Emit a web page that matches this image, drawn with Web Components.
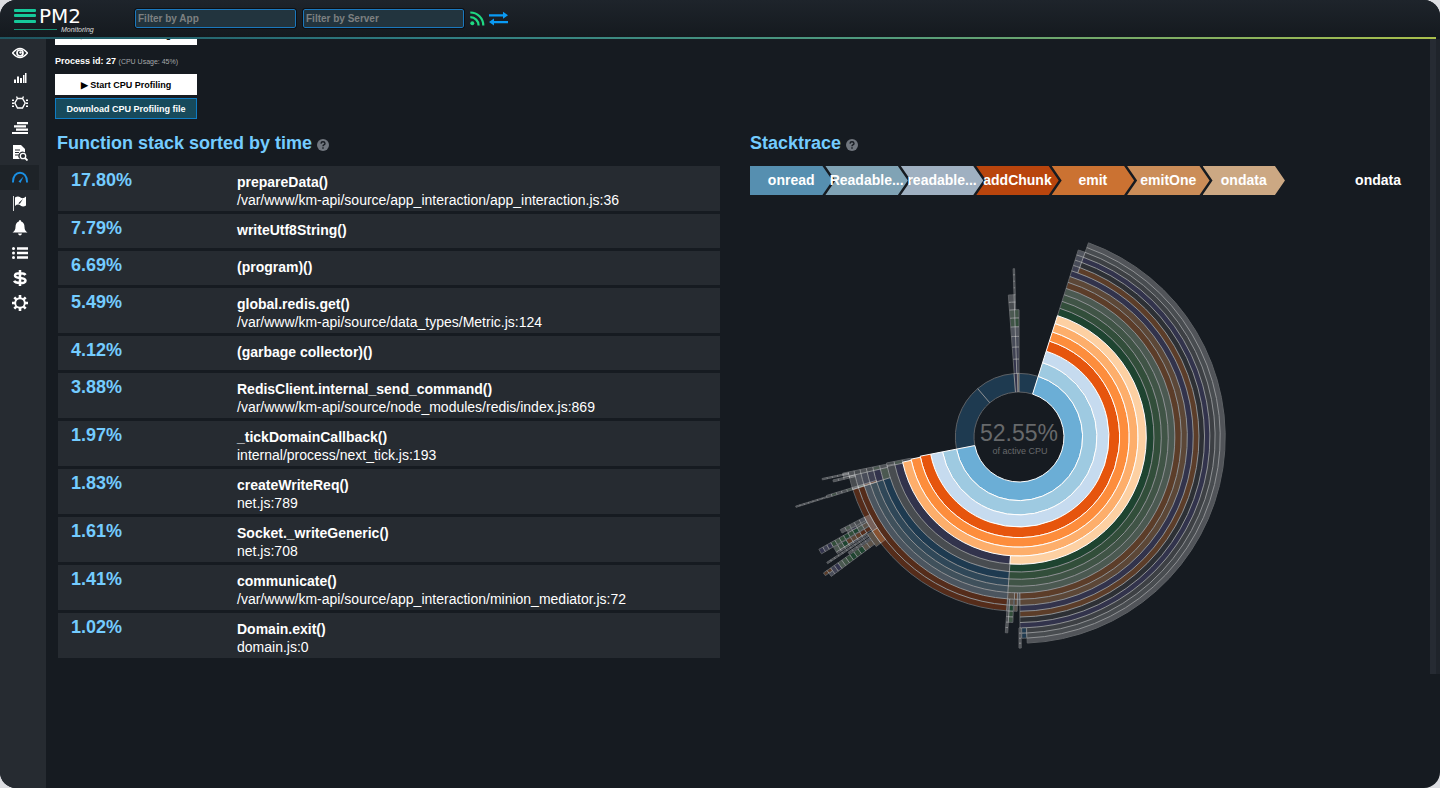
<!DOCTYPE html>
<html lang="en">
<head>
<meta charset="utf-8">
<meta name="viewport" content="width=device-width, initial-scale=1">
<title>PM2 Monitoring</title>
<style>
html, body { margin: 0; background: #dcdde1; }
body { font-family: "Liberation Sans", Arial, sans-serif; color: #fff; }
</style>
</head>
<body>
<pm-app></pm-app>

<script>
const define = (name, html, ready) => {
  const tpl = document.createElement('template');
  tpl.innerHTML = html;
  customElements.define(name, class extends HTMLElement {
    constructor() {
      super();
      this.attachShadow({ mode: 'open' }).append(tpl.content.cloneNode(true));
    }
    connectedCallback() { if (ready) ready(this.shadowRoot, this); }
  });
};

/* ---------- logo ---------- */
define('pm-logo', `
<style>
:host { display: block; width: 110px; height: 36px; }
svg { display: block; }
</style>
<svg width="110" height="36" viewBox="0 0 110 36" role="img" aria-label="PM2 Monitoring">
  <g fill="#16c99a">
    <rect x="14" y="8" width="22" height="3" rx="1"/>
    <rect x="14" y="13" width="22" height="3" rx="1"/>
    <rect x="14" y="19" width="22" height="3" rx="1"/>
    <rect x="14" y="28" width="43" height="1" opacity=".7"/>
  </g>
  <text x="39" y="22" font-family="DejaVu Sans, sans-serif" font-weight="400" font-size="20" fill="#fff">PM2</text>
  <text x="61" y="31" font-family="Liberation Sans, sans-serif" font-style="italic" font-size="7" fill="#ddd">Monitoring</text>
</svg>`);

/* ---------- text filter ---------- */
define('pm-filter', `
<style>
:host { display: block; width: 161px; }
input { display: block; box-sizing: border-box; width: 100%; height: 19px; padding: 0 2px; margin: 0;
  border: 1px solid #1b78bd; border-radius: 2px; background: #22343e; color: #fff; outline: 1px solid #0c1015;
  font: bold 10px "Liberation Sans", Arial, sans-serif; }
input::placeholder { color: #7d8081; opacity: 1; }
</style>
<input type="text">`, (root, host) => {
  const i = root.querySelector('input');
  i.placeholder = host.getAttribute('label');
  i.setAttribute('aria-label', host.getAttribute('label'));
});

/* ---------- top bar ---------- */
define('pm-topbar', `
<style>
:host { display: block; position: relative; z-index: 1; background: linear-gradient(#1e242b, #14191e); }
header { display: flex; align-items: center; height: 36px; padding-top: 1px; box-sizing: border-box; }
pm-logo { margin-right: 25px; }
pm-filter + pm-filter { margin-left: 7px; }
.rule { height: 2px; margin-top: 1px; background: linear-gradient(90deg, #1f5560, #2f7d82 30%, #4f9a7e 60%, #a9bf4c); margin-right: 4px; }
svg { display: block; }
.feed { margin-left: 6px; }
.swap { margin-left: 4px; }
</style>
<header>
  <pm-logo></pm-logo>
  <pm-filter label="Filter by App"></pm-filter>
  <pm-filter label="Filter by Server"></pm-filter>
  <svg class="feed" width="15" height="15" viewBox="0 0 15 15" fill="none" stroke="#1fd882" stroke-width="2.2">
    <circle cx="2.3" cy="12.2" r="2" fill="#1fd882" stroke="none"/>
    <path d="M.3 6.2a8.300 8.300 0 0 1 8.300 8.300M.3 1.500a13 13 0 0 1 13 13"/>
  </svg>
  <svg class="swap" width="19" height="15" viewBox="0 0 19 15" fill="#0a9bf5">
    <path d="M0 3.200H14V.8l5 3.500-5 3.500V5.400H0zM19 12.200H5v2.300L0 11l5-3.500V9.900H19z"/>
  </svg>
</header>
<div class="rule"></div>`);

/* ---------- side navigation ---------- */
const icons = [
  ['Overview', '<path d="M.5 8Q8-1 15.500 8 8 17 .5 8z" fill="none" stroke="#fff" stroke-width="1.500"/><circle cx="8" cy="8" r="3" fill="none" stroke="#fff" stroke-width="1.700"/><circle cx="8.500" cy="7.500" r="1.200"/>'],
  ['Metrics', '<path d="M2 9.500h2V13H2zM5 6.500h2V13H5zM8 8h2v5H8zM11 5h1.500v8H11zM13 3h1.500v10H13z"/>'],
  ['Issues', '<path d="M5.500 3.500h5L13.200 8l-2.700 5h-5L2.800 8zM5.500 3.500 4.500 1.500M10.500 3.500l1-2" fill="none" stroke="#fff" stroke-width="1.400"/><path d="M0 4.500h2V6H0zM0 7.500h2V9H0zM0 10.500h2V12H0zM14 4.500h2V6h-2zM14 7.500h2V9h-2zM14 10.500h2V12h-2z"/>'],
  ['Transactions', '<path d="M5 2h11v2.200H5zM2 5.300h12v2.200H2zM4 8.600h12v2.200H4zM0 11.900h16v2.200H0z"/>'],
  ['Logs', '<path fill-rule="evenodd" d="M1 0h8l4 4v3.500a4 4 0 0 0-5 6.500H1zM3 4.500v1h5v-1zM3 7v1h4V7zM3 9.500v1h3.500v-1z"/><circle cx="11" cy="11" r="2.700" fill="none" stroke="#fff" stroke-width="1.300"/><path d="m13 13 2.500 2.500" stroke="#fff" stroke-width="1.800"/>'],
  ['Profiling', '<path d="M1 12.500C.5-.5 15.500-.5 15 12.500" fill="none" stroke="#1a8fe3" stroke-width="1.900"/><path d="m6.500 11.500 5-5-3 6.500z" fill="#1a8fe3"/>'],
  ['Releases', '<path d="M1 1h1v15H1z" opacity=".8"/><path fill-rule="evenodd" d="M3 2.500q3-2 5.500 0t5.500-1v9q-3 2-5.500 0T3 11zM11 4 7 7.500 6.500 9l1.500-.5z"/>'],
  ['Alerts', '<path d="M8 0q1.200 0 1.200 1.500Q12.500 2.500 12.500 7q0 3.500 3 5.500H.5q3-2 3-5.500 0-4.500 3.300-5.500Q6.800 0 8 0zM6 13.500h4q-.5 2-2 2t-2-2z"/>'],
  ['Events', '<circle cx="1.500" cy="3.500" r="1.500"/><circle cx="1.500" cy="8" r="1.500"/><circle cx="1.500" cy="12.500" r="1.500"/><path d="M5 2.200h11v2.600H5zM5 6.700h11v2.600H5zM5 11.200h11v2.600H5z"/>'],
  ['Billing', '<path d="M13.500 5Q12.500 3.300 8 3.300 3 3.300 3 5.500T8 8q5.500.3 5.500 2.800T8 13q-5 0-5.800-2.200M8 0v16" fill="none" stroke="#fff" stroke-width="2.500"/>'],
  ['Settings', '<circle cx="8" cy="8" r="4.800" fill="none" stroke="#fff" stroke-width="1.900"/><g stroke="#fff" stroke-width="2.600"><path d="M8 0v3M8 13v3M0 8h3M13 8h3M2.300 2.300l2 2M11.700 11.700l2 2M2.300 13.700l2-2M11.700 4.300l2-2"/></g>']
];
define('pm-sidenav', `
<style>
:host { display: block; flex: none; width: 46px; background: #262b31; }
nav { padding-top: 1px; }
a { display: flex; align-items: center; justify-content: center; width: 39px; height: 25px; }
a[aria-current] { background: #1e2328; }
svg { display: block; fill: #fff; }
</style>
<nav>${icons.map(([t, p]) => `<a href="#${t.toLowerCase()}" aria-label="${t}"${t === 'Profiling' ? ' aria-current="page"' : ''}><svg width="16" height="16" viewBox="0 0 16 16">${p}</svg></a>`).join('')}</nav>`);

/* ---------- buttons ---------- */
define('pm-button', `
<style>
:host { display: block; width: 142px; }
button { display: block; box-sizing: border-box; width: 100%; height: 21px; margin: 0; padding: 0; border: 1px solid #fff;
  background: #fff; color: #000; font: bold 9px/12px "Liberation Sans", Arial, sans-serif; white-space: nowrap; }
:host([accent]) button { background: #174a5c; border-color: #0f7cc4; color: #fff; }
</style>
<button type="button"><slot></slot></button>`);

/* ---------- section title ---------- */
define('pm-title', `
<style>
:host { display: block; }
h2 { display: flex; align-items: center; gap: 5px; margin: 0; font-size: 18px; line-height: 22px; font-weight: bold; color: #74ccff; }
svg { display: block; margin-top: 3px; }
</style>
<h2><slot></slot>
<svg width="12" height="12" viewBox="0 0 12 12" role="img" aria-label="Help"><circle cx="6" cy="6" r="6" fill="#70767e"/>
<path d="M4 4.600Q4.100 2.800 6 2.800T8 4.500Q8 5.400 6.900 5.900 6 6.300 6 7.200M6 8.300v1.400" fill="none" stroke="#161b21" stroke-width="1.400"/></svg></h2>`);

/* ---------- function table ---------- */
const rows = [
  ['17.80%', 'prepareData()', '/var/www/km-api/source/app_interaction/app_interaction.js:36'],
  ['7.79%', 'writeUtf8String()'],
  ['6.69%', '(program)()'],
  ['5.49%', 'global.redis.get()', '/var/www/km-api/source/data_types/Metric.js:124'],
  ['4.12%', '(garbage collector)()'],
  ['3.88%', 'RedisClient.internal_send_command()', '/var/www/km-api/source/node_modules/redis/index.js:869'],
  ['1.97%', '_tickDomainCallback()', 'internal/process/next_tick.js:193'],
  ['1.83%', 'createWriteReq()', 'net.js:789'],
  ['1.61%', 'Socket._writeGeneric()', 'net.js:708'],
  ['1.41%', 'communicate()', '/var/www/km-api/source/app_interaction/minion_mediator.js:72'],
  ['1.02%', 'Domain.exit()', 'domain.js:0']
];
define('pm-functions', `
<style>
:host { display: block; }
table { width: 100%; border-collapse: separate; border-spacing: 0 3px; table-layout: fixed; }
th, td { text-align: left; vertical-align: top; background: #262b31; }
th { width: 166px; padding: 2px 0 8px 13px; font-size: 18px; line-height: 24px; color: #74ccff; }
td { padding: 7px 0 2px; font-size: 14px; line-height: 18px; }
strong { display: block; }
</style>
<table aria-label="Function stack sorted by time"><tbody>
${rows.map(([p, f, s]) => `<tr><th scope="row">${p}</th><td><strong>${f}</strong>${s || ''}</td></tr>`).join('')}
</tbody></table>`);

/* ---------- stack breadcrumb ---------- */
const crumbs = [['onread', '#568fb0'], ['Readable...', '#80a3b5'], ['readable...', '#9fb0c1'], ['addChunk', '#b9450d'],
  ['emit', '#cb7232'], ['emitOne', '#cb8d58'], ['ondata', '#cca883']];
define('pm-crumbs', `
<style>
:host { display: flex; justify-content: space-between; align-items: center; font-size: 14px; font-weight: bold; line-height: 29px; }
ol { display: flex; flex: none; width: 535px; margin: 0; padding: 0; list-style: none; }
li { flex: 1 1 0; min-width: 0; position: relative; text-align: center; white-space: nowrap; display: flex; justify-content: center; }
li + li { margin-left: -7px; }
li::before { content: ""; position: absolute; inset: 0; background: var(--c);
  clip-path: polygon(0 0, calc(100% - 10px) 0, 100% 50%, calc(100% - 10px) 100%, 0 100%, 10px 50%); }
li:first-child::before { clip-path: polygon(0 0, calc(100% - 10px) 0, 100% 50%, calc(100% - 10px) 100%, 0 100%); }
li span { position: relative; }
.last { margin-right: 12px; }
</style>
<ol>${crumbs.map(([t, c]) => `<li style="--c:${c}"><span>${t}</span></li>`).join('')}</ol>
<span class="last">ondata</span>`);

/* ---------- sunburst: ring n spans radius 45*sqrt(n) to 45*sqrt(n+1), angles clockwise from the top ---------- */
const C = { b0: '#3182bd', b1: '#6baed6', b2: '#9ecae1', b3: '#c6dbef', o0: '#e6550d', o1: '#fd8d3c', o2: '#fdae6b', o3: '#fdd0a2',
  g0: '#31a354', g1: '#74c476', g2: '#a1d99b', g3: '#c7e9c0', p0: '#756bb1', p1: '#9e9ac8', p2: '#bcbddc', p3: '#dadaeb',
  n0: '#636363', n1: '#969696', n2: '#bdbdbd', n3: '#d9d9d9' };
const R = n => 45 * Math.sqrt(n);
const pt = (r, a) => [r * Math.sin(a * Math.PI / 180), -r * Math.cos(a * Math.PI / 180)].map(v => v.toFixed(2)).join(' ');
const arc = (a0, a1, n, col, dim) => {
  const big = a1 - a0 > 180 ? 1 : 0, i = R(n), o = R(n + 1);
  return `<path${dim ? ' class="dim"' : ''} fill="${C[col]}" d="M${pt(i, a0)}L${pt(o, a0)}A${o} ${o} 0 ${big} 1 ${pt(o, a1)}L${pt(i, a1)}A${i} ${i} 0 ${big} 0 ${pt(i, a0)}Z"/>`;
};
/* consecutive rings over one angle range */
const run = (a0, a1, n, cols) => cols.split(' ').map((c, k) => arc(a0, a1, n + k, c, true)).join('');
const dim = [
  run(259, 319.500, 1, 'b0'), run(319.500, 355.500, 1, 'b0'), run(355.500, 358.500, 1, 'p0'), run(358.500, 360, 1, 'o2'), run(0, 17.600, 1, 'b0'),
  run(355.700, 358, 2, 'p0 p1 p2 p3 g2 g3 n2 n3'), run(358, 360, 2, 'p1 p1 p2 p3 g1 g2'), run(358, 358.500, 8, 'n3 n2 n3 n3 n2 n3'),
  run(17.600, 184.100, 8, 'g0 g1 g2 g3'), run(17.600, 179.700, 12, 'o1 o2 p0'),
  run(19.700, 179.700, 15, 'o1 n0 p0'), run(19.700, 177.700, 18, 'n1 n2 n3'),
  run(17.600, 19.700, 15, 'p1 p2 p2 p3'), run(177.800, 179.200, 18, 'b0 b0'), run(179.400, 180, 18, 'n3 n3 n3 n3'),
  run(179.700, 180.600, 12, 'n3 n3'), run(180.600, 181.600, 12, 'o1 o2 o3'), run(181.600, 184, 12, 'o3'),
  run(181.900, 183.300, 13, 'o3 g0 g1 g2'), run(183.300, 184, 13, 'n3 n3 n2 n3 n3 n3'),
  run(184.100, 257.300, 7, 'p0'), run(184.100, 257.800, 8, 'n2'), run(184.100, 252.500, 9, 'b0 b1 b2 b3 o0 o0'),
  run(252.500, 257, 9, 'g3 p0 p1 p2 p3 n2'), run(257, 258.400, 9, 'n3 g3 n2 n3 n2 n3 n3'),
  run(257.400, 258.900, 6, 'n3 g3 n2'), run(257.700, 258.100, 15, 'n3 n2 n3 n3 n3'), run(256.400, 257, 14, 'n3 n2 n3 n3'),
  run(252.400, 253.100, 11, 'o1 o2 g3 n3 g3 n2 n3 g2 n3'), run(252.500, 252.800, 20, 'n3 n2 n3 n3 n2 n3 n3'),
  run(237.300, 242.500, 14, 'b3'), run(232.500, 237.300, 14, 'o2 o3'),
  run(241.500, 242.600, 15, 'p3 n2 n3 g3 n3'), run(240.800, 241.300, 15, 'n3 n3 p0 n2'),
  run(239.400, 240.700, 15, 'o3 g3 g0 g1 g0 g1 g2 g1 p0 p1 p0'), run(237.800, 239.200, 15, 'o0 o0 o1 o2 o1 g0 g2 g3'),
  run(237.300, 237.800, 16, 'n3 n2 p2 n3 g3 n3 n2'), run(236.500, 236.900, 16, 'p1 p2 n3 n2 n3 n3 n3 n2 n3 n3'),
  run(235.500, 236, 16, 'p2 p3 n3 n2 n3'), run(233.400, 235.200, 16, 'o3 o3 g0 g1 g0 g1 g2 g3 p0 p1'),
  run(234.400, 235.200, 26, 'o1 o1'), run(233.400, 234.300, 26, 'p2')
].join('');
const lit = [[259, 1, 'b1'], [259, 2, 'b2'], [259, 3, 'b3'], [259, 4, 'o0'], [258.400, 5, 'o1'], [257.800, 6, 'o2'], [184.100, 7, 'o3']]
  .map(([a, n, c]) => arc(17.600, a, n, c)).join('');
define('pm-sunburst', `
<style>
:host { display: block; width: 538px; }
svg { display: block; width: 100%; }
path { stroke: #fff; }
.dim { opacity: .3; }
text { fill: #67696b; text-anchor: middle; font-family: "Liberation Sans", Arial, sans-serif; }
</style>
<svg viewBox="-269 -211 538 424" role="img" aria-label="Stacktrace share of active CPU">
${dim}${lit}
<text y="4" font-size="23">52.55%</text>
<text x="1" y="17" font-size="9">of active CPU</text>
</svg>`);

/* ---------- whole page ---------- */
define('pm-app', `
<style>
:host { display: flex; flex-direction: column; height: 100vh; overflow: hidden; border-radius: 16px; background: #161b21; }
.body { flex: 1; display: flex; min-height: 0; }
main { flex: 1; min-width: 0; overflow: hidden; padding: 0 17px 0 9px; }
.controls { margin-top: -15px; }
.controls p { margin: 10px 0 6px; font-size: 9px; line-height: 13px; font-weight: bold; }
.controls small { font-size: 7px; font-weight: normal; color: #a5a8ab; }
.controls pm-button + pm-button { margin-top: 3px; }
.cols { display: grid; grid-template-columns: 1fr 1fr; gap: 30px; padding-left: 2px; margin-top: 13px; }
pm-functions { margin: 9px 0 0 1px; }
pm-crumbs { margin-top: 12px; }
pm-sunburst { margin-top: 31px; }
.track { flex: none; width: 6px; height: 635px; background: #262b33; border-right: 4px solid #1f242b; }
</style>
<pm-topbar></pm-topbar>
<div class="body">
  <pm-sidenav></pm-sidenav>
  <main>
    <section class="controls">
      <pm-button>▶ Start CPU Profiling</pm-button>
      <p>Process id: 27 <small>(CPU Usage: 45%)</small></p>
      <pm-button>▶ Start CPU Profiling</pm-button>
      <pm-button accent>Download CPU Profiling file</pm-button>
    </section>
    <div class="cols">
      <section><pm-title>Function stack sorted by time</pm-title><pm-functions></pm-functions></section>
      <section><pm-title>Stacktrace</pm-title><pm-crumbs></pm-crumbs><pm-sunburst></pm-sunburst></section>
    </div>
  </main>
  <div class="track"></div>
</div>`);
</script>
</body>
</html>
